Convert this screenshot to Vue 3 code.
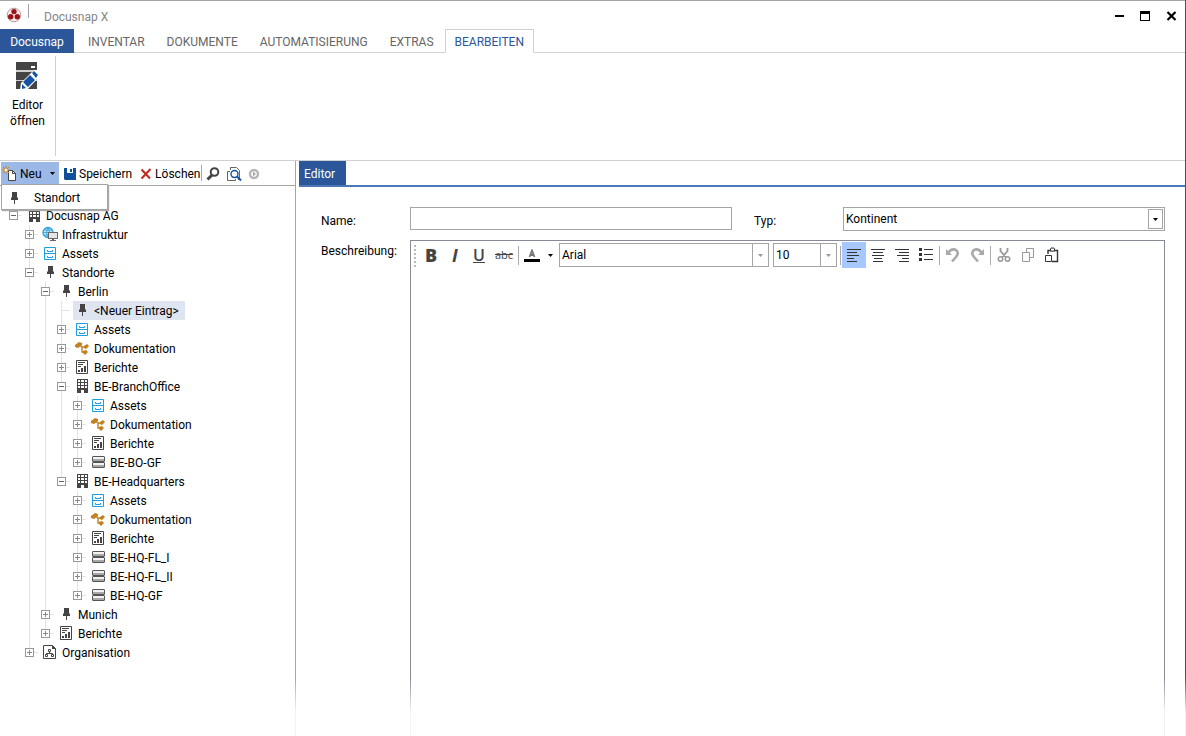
<script setup>
import { ref, h } from 'vue'

const tabs = ['INVENTAR', 'DOKUMENTE', 'AUTOMATISIERUNG', 'EXTRAS', 'BEARBEITEN']
const name = ref('')
const text = ref('')

const standard = () => [
  { label: 'Assets', icon: 'assets', plus: true },
  { label: 'Dokumentation', icon: 'docs', plus: true },
  { label: 'Berichte', icon: 'report', plus: true },
]
const room = (label) => ({ label, icon: 'rack', plus: true })

const tree = [
  {
    label: 'Docusnap AG', icon: 'building', children: [
      { label: 'Infrastruktur', icon: 'infra', plus: true },
      { label: 'Assets', icon: 'assets', plus: true },
      {
        label: 'Standorte', icon: 'pin', children: [
          {
            label: 'Berlin', icon: 'pin', children: [
              { label: '<Neuer Eintrag>', icon: 'pin', selected: true },
              ...standard(),
              { label: 'BE-BranchOffice', icon: 'building', children: [...standard(), room('BE-BO-GF')] },
              {
                label: 'BE-Headquarters', icon: 'building',
                children: [...standard(), room('BE-HQ-FL_I'), room('BE-HQ-FL_II'), room('BE-HQ-GF')],
              },
            ],
          },
          { label: 'Munich', icon: 'pin', plus: true },
          { label: 'Berichte', icon: 'report', plus: true },
        ],
      },
      { label: 'Organisation', icon: 'org', plus: true },
    ],
  },
]

const p = (d, fill = '#444') => h('path', { d, fill })
const s = (d, stroke = '#444', w = 1) => h('path', { d, fill: 'none', stroke, 'stroke-width': w })
const glyphs = {
  pin: () => [p('M6 2h5v5l1 1v2H9v4H8v-4H5V8l1-1z')],
  building: () => [p('M3 1h11v14h-4v-3H7v3H3z'), p('M4 2h2v2H4zM7 2h3v2H7zM11 2h2v2h-2zM4 5h2v2H4zM7 5h3v2H7zM11 5h2v2h-2zM4 8h2v2H4zM7 8h3v2H7zM11 8h2v2h-2z', '#fff')],
  infra: () => [
    h('circle', { cx: 6, cy: 6.5, r: 5, fill: '#d9effb', stroke: '#2b9fdc', 'stroke-width': 1.3 }),
    s('M1 6.500h10M6 1.500v10M2 4h8M2 9h7M6 1.500Q2 6.500 6 11.500M6 1.500Q10 6.500 6 11.500', '#2b9fdc', 0.8),
    h('rect', { x: 6.5, y: 6.5, width: 9, height: 6, fill: '#e6e6e6', stroke: '#666' }), p('M10 13h2v1h2v1H8v-1h2z', '#666'),
  ],
  assets: () => [s('M2.500 2.500h11v12h-11zM2.500 8.500h11', '#1b9de2'), s('M5.500 5v1.500h5V5M5.500 11v1.500h5V11', '#1b9de2')],
  docs: () => [
    p('M1 5l4-3 3 1v2L4 8 1 7zM10 6l3-2 2 2-3 3-2-1zM9 11l3-1 2 2-3 3-2-2z', '#c47f1f'),
    s('M6 5.500l2 1.500h4M8 7v5h3', '#c47f1f', 1.4),
  ],
  report: () => [s('M2.500 1.500h11v13h-11z'), p('M4 3h7v1H4zM4 5h5v1H4zM4 7h3v1H4zM4 11h2v2H4zM7 9h2v4H7zM10 7h2v6h-2z')],
  rack: () => [
    h('rect', { x: 2.5, y: 2.5, width: 12, height: 5, rx: 0.5, fill: '#f2f2f2', stroke: '#555' }),
    h('rect', { x: 2.5, y: 8.5, width: 12, height: 5, rx: 0.5, fill: '#f2f2f2', stroke: '#555' }),
    p('M3 5h11v2H3zM3 11h11v2H3z', '#a8a8a8'),
  ],
  org: () => [s('M1.500 1.500h9l3 3v10h-12z'), p('M10 1l4 4h-4z'), s('M6.500 5.500h2v2h-2zM3.500 10.500h2v2h-2zM9.500 10.500h2v2h-2zM7.500 8v1.500M4.500 10.500v-1h6v1')],
}
const Glyph = ({ name: key }) => h('svg', { width: 16, height: 17, viewBox: '0 0 16 17', 'aria-hidden': 'true' }, glyphs[key]())
Glyph.props = ['name']

const Branch = ({ items }) =>
  h('ul', { class: 'branch' }, items.map((n) =>
    h('li', { class: 'leaf' }, [
      h('div', { class: 'row' }, [
        n.children || n.plus
          ? h('button', { class: ['toggle', n.children ? 'open' : 'shut'], 'aria-label': (n.children ? 'Zuklappen ' : 'Aufklappen ') + n.label })
          : h('span', { class: 'no-toggle' }),
        h('button', { class: ['node', n.selected && 'selected'] }, [h(Glyph, { name: n.icon }), h('span', n.label)]),
      ]),
      n.children ? h(Branch, { items: n.children }) : null,
    ])))
Branch.props = ['items']
</script>

<template>
  <div class="window">
    <header class="titlebar">
      <svg class="logo" width="16" height="16" viewBox="0 0 16 16" aria-hidden="true">
        <circle cx="8" cy="8" r="6.800" fill="#f6ecec" stroke="#b79a9a" />
        <circle cx="8" cy="4.600" r="2.700" fill="#9a1318" /><circle cx="4.700" cy="9.700" r="2.700" fill="#9a1318" /><circle cx="11.300" cy="9.700" r="2.700" fill="#9a1318" />
      </svg>
      <span class="title-rule"></span>
      <span class="title">Docusnap X</span>
      <div class="controls">
        <button aria-label="Minimieren"><svg width="11" height="11" viewBox="0 0 11 11"><path d="M1 5h9v2H1z" /></svg></button>
        <button aria-label="Maximieren"><svg width="11" height="11" viewBox="0 0 11 11"><path d="M0 1h10v10H0zM1 4v6h8V4z" fill-rule="evenodd" /></svg></button>
        <button aria-label="Schließen"><svg width="11" height="11" viewBox="0 0 11 11"><path d="M1.500 2l8 8M9.500 2l-8 8" stroke="#000" stroke-width="2.200" /></svg></button>
      </div>
    </header>

    <nav class="tabs">
      <button class="tab main">Docusnap</button>
      <button v-for="t in tabs" :key="t" class="tab" :class="{ active: t === 'BEARBEITEN' }">{{ t }}</button>
      <span class="tabs-fill"></span>
    </nav>

    <section class="ribbon">
      <button class="ribbon-button">
        <svg width="23" height="30" viewBox="0 0 23 30" aria-hidden="true">
          <path d="M0 0h21v27H0z" fill="#444" />
          <path d="M0 8h21v2H0zM0 18h21v1H0z" fill="#d0d0d0" /><path d="M15 4h4v2h-4z" fill="#fff" />
          <path d="M4 28l1-7L18 8h3l2 2v5L11 28z" fill="#fff" />
          <path d="M7 20l7-7 5 5-7 7zM16 11l2-2 4 4-2 3zM6 22l4 4-4 1z" fill="#1553a0" />
        </svg>
        <span>Editor<br>öffnen</span>
      </button>
    </section>

    <div class="body">
      <aside class="side">
        <div class="tools">
          <div class="new-wrap">
            <button class="tool new">
              <svg width="16" height="16" viewBox="0 0 16 16" aria-hidden="true">
                <path d="M6.500 4.500h4l3 3v7h-7z" fill="#fff" stroke="#444" /><path d="M10.500 4.500v3h3" fill="none" stroke="#444" />
                <path d="M4 0v8M0 4h8M1 1l6 6M7 1L1 7" stroke="#c47f1f" /><circle cx="4" cy="4" r="1.500" fill="#fff2cc" />
              </svg>
              <span>Neu</span>
              <svg class="drop" width="5" height="3" viewBox="0 0 5 3" aria-hidden="true"><path d="M0 0h5L2.500 3z" /></svg>
            </button>
            <div class="menu">
              <button class="menu-item"><Glyph name="pin" /><span>Standort</span></button>
            </div>
          </div>
          <button class="tool save">
            <svg width="12" height="12" viewBox="0 0 12 12" aria-hidden="true"><path d="M0 0h12v12H1l-1-1z" fill="#0f4f9c" /><path d="M3 0h6v5H3z" fill="#fff" /><path d="M6 1h2v3H6z" fill="#0f4f9c" /></svg>
            <span>Speichern</span>
          </button>
          <button class="tool delete">
            <svg width="12" height="12" viewBox="0 0 12 12" aria-hidden="true"><path d="M1.500 1.500L10 10.500M10.500 1L1.500 10.500" stroke="#c22a1c" stroke-width="2" /></svg>
            <span>Löschen</span>
          </button>
          <span class="tool-rule"></span>
          <button class="tool" aria-label="Suchen"><svg width="14" height="14" viewBox="0 0 14 14"><circle cx="8.500" cy="5" r="3.800" fill="none" stroke="#444" stroke-width="2" /><path d="M6 8l-4.500 4.500" stroke="#444" stroke-width="3" /></svg></button>
          <button class="tool" aria-label="Vorschau"><svg width="16" height="16" viewBox="0 0 16 16"><path d="M4.500 4V1.500h6l3 3v9H12M4 5.500H1.500v9h8V13" fill="none" stroke="#666" /><circle cx="8.500" cy="8" r="3.500" fill="#fff" stroke="#1553a0" stroke-width="1.400" /><path d="M11 10.500l4 4" stroke="#1553a0" stroke-width="2" /></svg></button>
          <button class="tool" aria-label="Weiter"><svg width="12" height="12" viewBox="0 0 12 12"><circle cx="6" cy="6" r="4" fill="#fff" stroke="#b5b5b5" stroke-width="2.400" /><path d="M5 3.500L8 6 5 8.500z" fill="#a8a8a8" /></svg></button>
        </div>
        <div class="tree"><Branch :items="tree" /></div>
      </aside>

      <main class="content">
        <div class="content-tabs"><button class="content-tab">Editor</button></div>
        <form class="form" @submit.prevent>
          <label for="name">Name:</label>
          <input id="name" v-model="name" class="field" type="text">
          <label for="kind" class="kind-label">Typ:</label>
          <div class="kind">
            <select id="kind" class="field"><option>Kontinent</option></select>
            <span class="kind-arrow"><svg width="5" height="3" viewBox="0 0 5 3" aria-hidden="true"><path d="M0 0h5L2.500 3z" /></svg></span>
          </div>
          <label for="text" class="text-label">Beschreibung:</label>
          <div class="rich">
            <div class="format">
              <span class="grip"></span>
              <button class="fmt bold" aria-label="Fett">B</button>
              <button class="fmt italic" aria-label="Kursiv">I</button>
              <button class="fmt under" aria-label="Unterstrichen">U</button>
              <button class="fmt strike" aria-label="Durchgestrichen">abc</button>
              <span class="rule"></span>
              <button class="color" aria-label="Schriftfarbe">
                <svg width="16" height="13" viewBox="0 0 16 13"><path d="M5.500 8L8 1.500 10.500 8M6 6h4" fill="none" stroke="#777" stroke-width="1.800" /><path d="M0 10h16v3H0z" /></svg>
                <svg width="5" height="3" viewBox="0 0 5 3"><path d="M0 0h5L2.500 3z" /></svg>
              </button>
              <div class="combo family">
                <select aria-label="Schriftart"><option>Arial</option></select>
                <span class="combo-arrow"><svg width="5" height="3" viewBox="0 0 5 3" aria-hidden="true"><path d="M0 0h5L2.500 3z" fill="#999" /></svg></span>
              </div>
              <div class="combo size">
                <select aria-label="Schriftgrad"><option>10</option></select>
                <span class="combo-arrow"><svg width="5" height="3" viewBox="0 0 5 3" aria-hidden="true"><path d="M0 0h5L2.500 3z" fill="#999" /></svg></span>
              </div>
              <span class="rule tight"></span>
              <button class="fmt on" aria-label="Linksbündig"><svg width="16" height="16" viewBox="0 0 16 16"><path d="M1 2.500h14M1 5.500h10M1 8.500h12M1 11.500h7M1 14.500h10" stroke="#333" /></svg></button>
              <button class="fmt" aria-label="Zentriert"><svg width="16" height="16" viewBox="0 0 16 16"><path d="M1 2.500h14M3 5.500h10M2 8.500h12M4 11.500h8M3 14.500h10" stroke="#333" /></svg></button>
              <button class="fmt" aria-label="Rechtsbündig"><svg width="16" height="16" viewBox="0 0 16 16"><path d="M1 2.500h14M5 5.500h10M3 8.500h12M8 11.500h7M5 14.500h10" stroke="#333" /></svg></button>
              <button class="fmt" aria-label="Liste"><svg width="16" height="16" viewBox="0 0 16 16"><path d="M1 1h3v3H1zM1 6h3v3H1zM1 11h3v3H1z" fill="#333" /><path d="M6 2.500h9M6 7.500h9M6 12.500h9" stroke="#333" /></svg></button>
              <span class="rule"></span>
              <button class="fmt" aria-label="Rückgängig"><svg width="16" height="16" viewBox="0 0 16 16"><path d="M3 6Q6 1.500 10 2.500Q15 5 11 10L7 14.500" fill="none" stroke="#aaa" stroke-width="2.600" /><path d="M1 2v6h6z" fill="#aaa" /></svg></button>
              <button class="fmt" aria-label="Wiederholen"><svg width="16" height="16" viewBox="0 0 16 16"><path d="M13 6Q10 1.500 6 2.500Q1 5 5 10L9 14.500" fill="none" stroke="#aaa" stroke-width="2.600" /><path d="M15 2v6H9z" fill="#aaa" /></svg></button>
              <span class="rule"></span>
              <button class="fmt" aria-label="Ausschneiden"><svg width="16" height="16" viewBox="0 0 16 16"><path d="M4.500 1v3l5.500 6.500M11.500 1v3L6 10.500" fill="none" stroke="#999" stroke-width="1.800" /><circle cx="4.500" cy="12" r="2.200" fill="none" stroke="#999" stroke-width="1.500" /><circle cx="11.500" cy="12" r="2.200" fill="none" stroke="#999" stroke-width="1.500" /></svg></button>
              <button class="fmt" aria-label="Kopieren"><svg width="16" height="16" viewBox="0 0 16 16"><path d="M6.500 5V1.500h7v9H10M2.500 5.500h7v9h-7z" fill="#fafafa" stroke="#999" /></svg></button>
              <button class="fmt" aria-label="Einfügen"><svg width="16" height="16" viewBox="0 0 16 16"><path d="M4 7V3.500h9.500v11H8" fill="none" stroke="#333" stroke-width="1.400" /><path d="M1.500 8.500h6v6h-6z" fill="#fff" stroke="#333" /><path d="M6 4l1-3h3l1 3z" fill="#fff" stroke="#333" /></svg></button>
            </div>
            <textarea id="text" v-model="text"></textarea>
          </div>
        </form>
      </main>
    </div>
  </div>
</template>

<style>
.branch { list-style: none; margin: 0; padding: 0; }
.branch .branch { margin-left: 16px; }
.branch .branch .leaf {
  background: linear-gradient(#e2e2e2, #e2e2e2) 13px 0 / 1px 100% no-repeat;
}
.branch .branch .leaf:last-child { background-size: 1px 10px; }
.row {
  display: flex;
  align-items: center;
  height: 19px;
  padding-left: 9px;
  background: linear-gradient(#e2e2e2, #e2e2e2) 13px 9px / 9px 1px no-repeat;
}
.toggle, .no-toggle { flex: none; width: 9px; height: 9px; padding: 0; }
.toggle { border: 1px solid #989898; border-radius: 0; }
.toggle.open { background: linear-gradient(#666, #666) center / 5px 1px no-repeat #fff; }
.toggle.shut {
  background: linear-gradient(#888, #888) center / 5px 1px no-repeat, linear-gradient(#888, #888) center / 1px 5px no-repeat #fff;
}
.node {
  display: flex;
  align-items: center;
  gap: 4px;
  height: 19px;
  margin-left: 7px;
  padding: 0 6px 0 1px;
  border: 0;
  background: none;
  font: inherit;
  color: #000;
  white-space: nowrap;
}
.node.selected { background: #dfe5f0; }
</style>

<style scoped>
.window {
  display: flex;
  flex-direction: column;
  min-height: 100vh;
  box-sizing: border-box;
  border-right: 1px solid;
  border-image: linear-gradient(#2b579a calc(100% - 60px), #eef1f6 calc(100% - 25px)) 1;
  background: #fff;
  color: #000;
  font: 12px/16px Roboto, "Open Sans", sans-serif;
}
button, input, select, textarea { font: inherit; color: inherit; border-radius: 0; }
button { border: 0; padding: 0; background: none; }
svg { display: block; flex: none; }

.titlebar { display: flex; align-items: flex-start; height: 28px; padding: 0 8px 0 6px; border-top: 1px solid #a5a5a5; }
.logo { margin-top: 6px; }
.title-rule { width: 1px; height: 14px; margin: 3px 15px 0 6px; background: #a0a0a0; }
.title { margin-top: 8px; color: #858585; }
.controls { display: flex; gap: 15px; margin: 9px 0 0 auto; }

.tabs { display: flex; height: 24px; }
.tab { padding: 2px 11px 0; border-bottom: 1px solid #d0d0d0; color: #666; }
.tab.main { width: 74px; padding: 2px 0 0; border-bottom-color: #2b579a; background: #2b579a; color: #fff; }
.tab.main + .tab { padding-left: 14px; }
.tab.active { padding: 1px 9px 0; border: 1px solid #d0d0d0; border-bottom-color: #fff; color: #2b579a; }
.tabs-fill { flex: 1; border-bottom: 1px solid #d0d0d0; }

.ribbon { display: flex; height: 107px; border-bottom: 1px solid #d0d0d0; }
.ribbon-button {
  display: flex; flex-direction: column; align-items: center; gap: 5px;
  width: 56px; height: 100px; margin-top: 3px; padding-top: 6px; border-right: 1px solid #d0d0d0;
}

.body { display: flex; flex: 1; }
.side {
  display: flex; flex-direction: column; flex: none; width: 295px;
  border-right: 1px solid;
  border-image: linear-gradient(#a5a5a5 calc(100% - 60px), #f4f4f4 calc(100% - 25px)) 1;
}
.tools { display: flex; align-items: center; height: 24px; border-bottom: 1px solid #a5a5a5; }
.tool { display: flex; align-items: center; gap: 2px; height: 23px; margin: 1px 6px 0 0; white-space: nowrap; }
.new-wrap { position: relative; align-self: flex-start; margin-left: 1px; }
.tool.new { width: 58px; margin-right: 5px; padding-left: 1px; background: #9cb8e6; }
.new .drop { margin: 0 4px 0 auto; }
.tool.save { gap: 3px; margin-right: 8px; }
.tool.delete { gap: 3px; margin-right: 1px; }
.tool-rule { width: 1px; height: 16px; margin-right: 4px; background: #aaa; }
.menu {
  position: absolute; top: 23px; left: 0; z-index: 2;
  box-sizing: border-box; width: 107px; height: 26px;
  border: 1px solid #a5a5a5; background: #fff; box-shadow: 1px 1px 1px #aaa;
}
.menu-item { display: flex; align-items: center; gap: 12px; height: 25px; padding: 1px 0 0 4px; }
.tree { flex: 1; padding-top: 20px; }

.content { display: flex; flex-direction: column; flex: 1; min-width: 0; padding-left: 3px; }
.content-tabs { height: 26px; box-sizing: border-box; border-bottom: 2px solid #4a77b8; }
.content-tab { height: 24px; padding: 2px 11px 0 5px; background: #2b579a; color: #fff; }
.form {
  display: grid; flex: 1;
  grid-template-columns: 89px 322px 111px minmax(200px, 322px);
  grid-template-rows: 24px 1fr;
  row-gap: 9px;
  padding: 20px 20px 0 22px;
}
.form label { padding-top: 6px; }
.form .kind-label { padding-left: 22px; }
.form .text-label { padding-top: 3px; white-space: nowrap; }
.field {
  box-sizing: border-box; width: 100%; height: 24px; margin: 0; padding: 0 2px;
  border: 1px solid #a5a5a5; background: #fff; appearance: none; outline: 0;
}
input.field { height: 23px; }
.kind { position: relative; }
.kind-arrow {
  position: absolute; top: 2px; right: 2px; display: grid; place-items: center;
  width: 13px; height: 18px; border: 1px solid #a5a5a5; pointer-events: none;
}
.rich {
  grid-column: 2 / -1; display: flex; flex-direction: column;
  border: 1px solid; border-bottom: 0;
  border-image: linear-gradient(#868b97 calc(100% - 60px), #f2f2f4 calc(100% - 25px)) 1;
}
.format { display: flex; align-items: center; height: 28px; padding: 0 3px; }
.grip {
  width: 2px; height: 22px; margin: 2px 3px 0 0;
  background: repeating-linear-gradient(#bbb 0 2px, #fff 2px 4px);
}
.fmt { display: grid; flex: none; place-items: center; width: 24px; height: 26px; color: #444; }
.bold, .italic, .under, .strike { font-family: "Open Sans", sans-serif; }
.bold { font-size: 18px; font-weight: 800; }
.italic { font-size: 18px; font-weight: 700; font-style: italic; }
.under { font-size: 16px; font-weight: 600; text-decoration: underline; }
.strike { width: 26px; font-size: 11px; text-decoration: line-through; }
.rule { flex: none; width: 1px; height: 19px; margin: 0 1px; background: #aaa; }
.rule.tight { margin: 0 1px 0 0; }
.color { display: flex; align-items: center; gap: 8px; margin: 0 6px 0 4px; }
.combo { display: flex; box-sizing: border-box; height: 24px; border: 1px solid #a5a5a5; }
.combo select { flex: 1; min-width: 0; padding: 0 2px; border: 0; background: none; appearance: none; outline: 0; }
.combo-arrow { display: grid; place-items: center; width: 15px; border-left: 1px solid #a5a5a5; }
.family { width: 210px; margin-right: 4px; }
.size { width: 64px; margin-right: 3px; }
.on { background: #a6c8ff; }
textarea { flex: 1; border: 0; padding: 4px; background: none; resize: none; outline: 0; }
</style>
